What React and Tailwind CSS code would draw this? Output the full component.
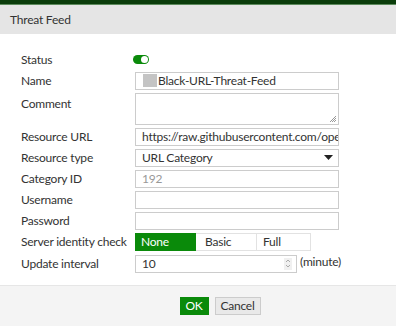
import React from 'react'

function Label({ children, className = '' }) {
  return <div className={`w-[114px] shrink-0 whitespace-nowrap text-[12px] text-[#333] ${className}`}>{children}</div>
}

function TextBox({ children, className = '', width = 'w-[204px]' }) {
  return (
    <div className={`${width} h-[18px] border border-[#ccc] bg-white px-[6px] flex items-center text-[12px] text-[#333] leading-none overflow-hidden whitespace-nowrap ${className}`}>
      {children}
    </div>
  )
}

export default function App() {
  return (
    <div className="w-[400px] h-[326px] bg-white flex flex-col font-['Lato','Liberation_Sans',sans-serif] tracking-[-0.22px] overflow-hidden">
      <div className="h-[5px] bg-[#0b3d0b] border-b border-[#5c8a5c] mr-[4px]" />
      <div className="h-[29px] bg-[#e5e5e5] mr-[4px] flex items-center pl-[10px] text-[12px] text-[#333]">
        Threat Feed
      </div>

      <div className="flex-1 pl-[21px] pt-[17px] flex flex-col">
        <div className="flex items-center h-[17px]">
          <Label>Status</Label>
          <div className="ml-[-2px] w-[16px] h-[9px] rounded-full bg-[#0a8a0a] flex items-center justify-end pr-[1px]">
            <div className="w-[7px] h-[7px] rounded-full bg-white" />
          </div>
        </div>

        <div className="flex items-center mt-[3px] h-[19px]">
          <Label>Name</Label>
          <TextBox>
            <span className="w-[14px] h-[13px] bg-[#c4c4c4] mr-[1px] ml-[1px] shrink-0" />
            Black-URL-Threat-Feed
          </TextBox>
        </div>

        <div className="flex items-start mt-[3px]">
          <Label className="pt-[2px]">Comment</Label>
          <div className="relative w-[204px] h-[32px] border border-[#ccc] bg-white">
            <svg className="absolute right-[1px] bottom-[1px]" width="8" height="8" viewBox="0 0 8 8">
              <path d="M7 1L1 7M7 3L3 7M7 5L5 7" stroke="#999" strokeWidth="1" />
            </svg>
          </div>
        </div>

        <div className="flex items-center mt-[2px] h-[19px]">
          <Label>Resource URL</Label>
          <TextBox className="px-[5px]">https://raw.githubusercontent.com/ope</TextBox>
        </div>

        <div className="flex items-center mt-[2px] h-[19px]">
          <Label>Resource type</Label>
          <TextBox className="justify-between">
            <span>URL Category</span>
            <svg width="9" height="5" viewBox="0 0 9 5" className="mr-[-1px]">
              <path d="M0 0H9L4.5 5Z" fill="#222" />
            </svg>
          </TextBox>
        </div>

        <div className="flex items-center mt-[2px] h-[19px]">
          <Label>Category ID</Label>
          <TextBox className="text-[#999]">192</TextBox>
        </div>

        <div className="flex items-center mt-[2px] h-[19px]">
          <Label>Username</Label>
          <TextBox />
        </div>

        <div className="flex items-center mt-[2px] h-[19px]">
          <Label>Password</Label>
          <TextBox />
        </div>

        <div className="flex items-center mt-[2px] h-[19px]">
          <Label>Server identity check</Label>
          <div className="flex h-[18px] text-[12px]">
            <div className="w-[61px] bg-[#0a8a0a] text-white pl-[6px] flex items-center">None</div>
            <div className="w-[61px] border-y border-r border-[#e2e2e2] text-[#333] pl-[9px] flex items-center">Basic</div>
            <div className="w-[54px] border-y border-r border-[#e2e2e2] text-[#333] pl-[6px] flex items-center">Full</div>
          </div>
        </div>

        <div className="flex items-center mt-[3px] h-[19px]">
          <Label>Update interval</Label>
          <TextBox width="w-[162px]" className="justify-between pr-[4px]">
            <span>10</span>
            <span className="w-[8px] h-[12px] bg-[#f0f0f0] flex items-center justify-center">
              <svg width="6" height="9" viewBox="0 0 6 9">
                <path d="M1 3L3 1L5 3M1 6L3 8L5 6" stroke="#999" strokeWidth="0.8" fill="none" />
              </svg>
            </span>
          </TextBox>
          <span className="ml-[3px] text-[12px] text-[#333] -mt-[4px]">(minute)</span>
        </div>
      </div>

      <div className="h-[41px] bg-[#f4f4f4] border-t border-[#e6e6e6] mr-[4px] flex items-start justify-center gap-[6px] pt-[11px] pl-[44px]">
        <div className="w-[29px] h-[18px] bg-[#0a8a0a] text-white text-[12px] flex items-center justify-center">OK</div>
        <div className="w-[46px] h-[18px] bg-[#e9e9e9] border border-[#ccc] text-[#333] text-[12px] flex items-center justify-center">Cancel</div>
      </div>
    </div>
  )
}
